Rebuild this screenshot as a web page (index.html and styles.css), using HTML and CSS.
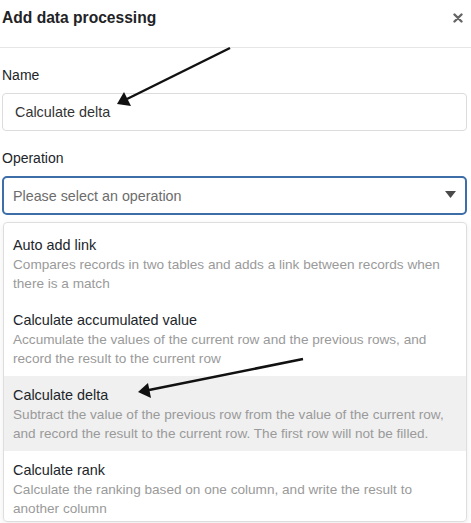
FILE: index.html
```html
<!DOCTYPE html>
<html>
<head>
<meta charset="utf-8">
<link rel="stylesheet" href="styles.css">
</head>
<body>
<div class="dialog">
  <div class="header">
    <div class="title">Add data processing</div>
    <svg class="close" width="10" height="10" viewBox="0 0 10 10"><path d="M1.5 1.5 L8.5 8.5 M8.5 1.5 L1.5 8.5" stroke="#666" stroke-width="2.4" stroke-linecap="round"/></svg>
  </div>
  <div class="content">
    <div class="label label-name">Name</div>
    <div class="input">Calculate delta</div>
    <div class="label label-op">Operation</div>
    <div class="select">
      <span class="placeholder">Please select an operation</span>
      <svg class="caret" width="11" height="7" viewBox="0 0 11 7"><path d="M0 0 H11 L5.5 7 Z" fill="#4a4a4a"/></svg>
    </div>
    <div class="menu">
      <div class="item">
        <div class="item-title">Auto add link</div>
        <div class="item-desc">Compares records in two tables and adds a link between records when there is a match</div>
      </div>
      <div class="item">
        <div class="item-title">Calculate accumulated value</div>
        <div class="item-desc">Accumulate the values of the current row and the previous rows, and record the result to the current row</div>
      </div>
      <div class="item active">
        <div class="item-title">Calculate delta</div>
        <div class="item-desc">Subtract the value of the previous row from the value of the current row, and record the result to the current row. The first row will not be filled.</div>
      </div>
      <div class="item">
        <div class="item-title">Calculate rank</div>
        <div class="item-desc">Calculate the ranking based on one column, and write the result to another column</div>
      </div>
    </div>
  </div>
  <svg class="arrows" width="471" height="523" viewBox="0 0 471 523">
    <line x1="230" y1="48" x2="127" y2="99" stroke="#111" stroke-width="2.5"/>
    <path d="M117 104 L124 92 L131 106 Z" fill="#111"/>
    <line x1="303" y1="359" x2="149" y2="390" stroke="#111" stroke-width="2.5"/>
    <path d="M138 392 L148 383 L151 398 Z" fill="#111"/>
  </svg>
</div>
</body>
</html>
```

FILE: styles.css
```css
* { box-sizing: border-box; }
html, body { margin: 0; padding: 0; background: #fff; }
body {
  font-family: "Liberation Sans", Arial, sans-serif;
  color: #212529;
  width: 471px;
  height: 523px;
  overflow: hidden;
}
.dialog { position: relative; width: 471px; height: 523px; }
.header {
  height: 48px;
  border-bottom: 1px solid #e6e6e6;
  display: flex;
  align-items: flex-start;
  justify-content: space-between;
  padding: 8px 8px 0 2px;
}
.title {
  font-size: 15.6px;
  font-weight: bold;
  line-height: 20px;
  color: #1f2326;
}
.close { margin-top: 5px; }
.content { padding: 0 4px 0 2px; }
.label {
  font-size: 14px;
  line-height: 20px;
  color: #212529;
}
.label-name { margin-top: 17px; }
.input {
  margin-top: 8px;
  height: 38px;
  border: 1px solid #dcdcdc;
  border-radius: 4px;
  padding: 0 12px;
  display: flex;
  align-items: center;
  font-size: 14.4px;
  color: #333;
}
.label-op { margin-top: 17px; }
.select {
  margin-top: 8px;
  height: 39px;
  border: 2px solid #3d6ea8;
  border-radius: 5px;
  padding: 0 9px 0 9px;
  display: flex;
  align-items: center;
  justify-content: space-between;
  font-size: 14.3px;
}
.placeholder { color: #6c6c6c; }
.caret { margin-top: -3px; }
.menu {
  margin: 7px 0 0 1px;
  border: 1px solid #dedede;
  border-radius: 4px;
  padding-top: 3px;
  height: 300px;
  box-shadow: 0 2px 6px rgba(0,0,0,0.08);
  overflow: hidden;
}
.item {
  height: 75px;
  padding: 9px 8px 0 9px;
}
.item.active { background: #f0f0f0; }
.item-title {
  font-size: 14.4px;
  line-height: 20px;
  color: #212529;
}
.item-desc {
  font-size: 13.6px;
  line-height: 19px;
  color: #9a9a9a;
}
.arrows { position: absolute; left: 0; top: 0; pointer-events: none; }
```
